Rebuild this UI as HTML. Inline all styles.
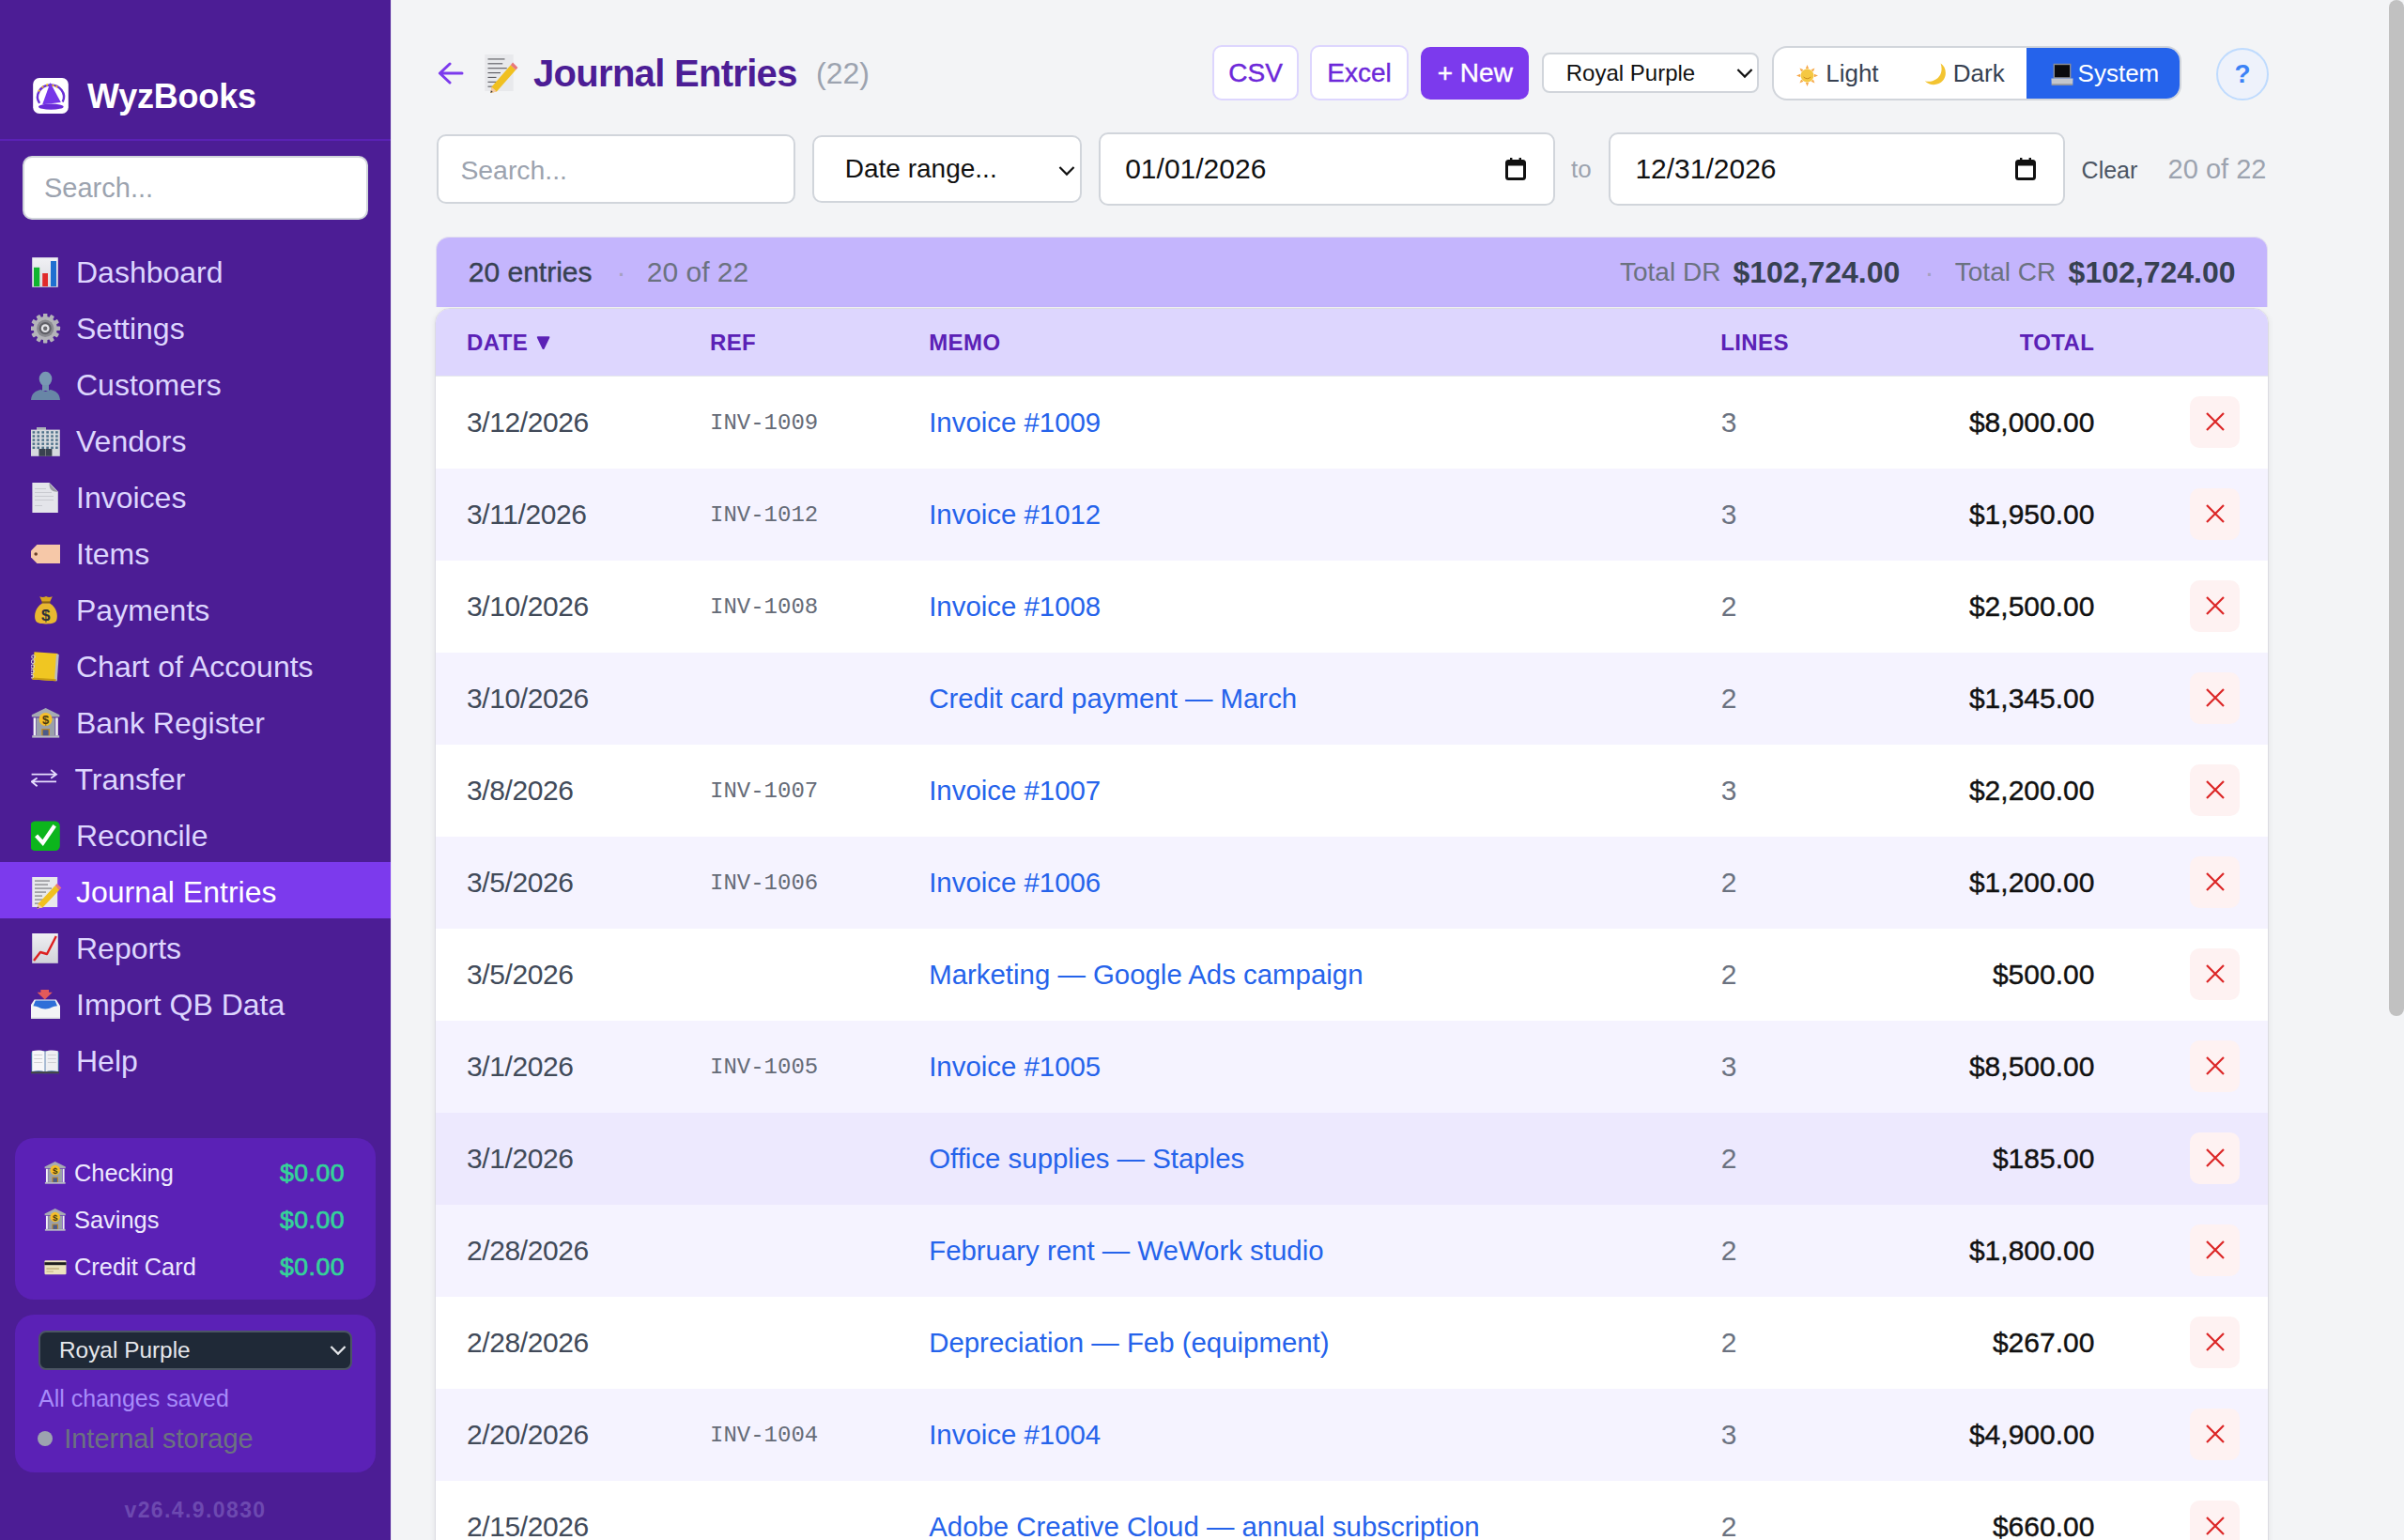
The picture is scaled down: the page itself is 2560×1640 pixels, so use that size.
<!DOCTYPE html>
<html><head><meta charset="utf-8"><title>Journal Entries</title>
<style>
html{zoom:2}
@media (max-width:1400px){html{zoom:1}}
*{box-sizing:border-box;margin:0;padding:0}
body{width:1280px;height:820px;overflow:hidden;background:#f3f4f6;font-family:"Liberation Sans",sans-serif;position:relative;color:#111}
.abs{position:absolute}
#side{position:absolute;left:0;top:0;width:208px;height:820px;background:#4c1d95}
#side .edge{position:absolute;left:208px;top:0;width:0.5px;height:820px;background:#e9e5f5}
.brand{position:absolute;left:17.5px;top:41.3px;width:19px;height:19px}
.brandt{position:absolute;left:46.5px;top:39.5px;font-size:18px;font-weight:700;color:#fff;line-height:24px;letter-spacing:-0.1px}
.sep{position:absolute;left:0;top:74px;width:208px;height:1px;background:#5b21b6}
.sinput{position:absolute;left:12px;top:83px;width:184px;height:34px;background:#fff;border:1px solid #d1d5db;border-radius:5px}
.sinput span{position:absolute;left:10.5px;top:0;line-height:32px;font-size:14.5px;color:#9ca3af}
.nav{position:absolute;left:0;width:208px;height:30px}
.nav.act{background:#7c3aed}
.nav .ic{position:absolute;left:16.5px;top:8px;width:16px;height:16px}
.nav .ic svg{display:block}
.nav .nt{position:absolute;top:1.2px;line-height:30px;font-size:16px;color:#ddd6fe;white-space:nowrap}
.nav.act .nt{color:#fff}
.box{position:absolute;left:8px;width:192px;background:#5b21b6;border-radius:10px}
.acct{position:absolute;left:0;width:192px;height:20px}
.acct .ic{position:absolute;left:15.5px;top:2px;width:12px;height:16px}
.acct .ic svg{width:12px;height:16px;display:block}
.acct .an{position:absolute;left:31.5px;top:0;line-height:20px;font-size:12.7px;color:#ede9fe}
.acct .av{position:absolute;right:16.5px;top:0;line-height:20px;font-size:13.3px;font-weight:400;-webkit-text-stroke:0.35px #34d399;color:#34d399;letter-spacing:0.25px}
.ssel{position:absolute;left:12.5px;top:8.3px;width:167px;height:21.3px;background:#1f2937;border:1px solid #4b5563;border-radius:4px}
.ssel span{position:absolute;left:10px;top:0.3px;line-height:19.3px;font-size:12.2px;color:#e5e7eb}
.ssel svg{position:absolute;left:154px;top:6.5px}
.saved{position:absolute;left:12.5px;top:36.6px;line-height:16px;font-size:12.5px;color:#a78bfa}
.dot{position:absolute;left:11.9px;top:62px;width:8px;height:8px;border-radius:50%;background:#9ca3af}
.storage{position:absolute;left:26.1px;top:57px;line-height:18px;font-size:14.5px;color:#6b7280}
.ver{position:absolute;left:0;width:208px;top:796px;line-height:16px;text-align:center;font-size:11.5px;font-weight:700;color:#6d49b0;letter-spacing:0.7px}
/* main */
.back{position:absolute;left:233px;top:33px}
.temoji{position:absolute;left:257.3px;top:29px;width:18px;height:19.5px;line-height:0}
.title{position:absolute;left:284px;top:26px;line-height:26px;font-size:20px;font-weight:700;color:#4c1d95;letter-spacing:-0.35px;white-space:nowrap}
.count{position:absolute;left:434.5px;top:28px;line-height:22px;font-size:16px;color:#9ca3af}
.btn{position:absolute;top:24.2px;height:29.5px;background:#fff;border:1px solid #ddd6fe;border-radius:5px;color:#6d28d9;font-size:14px;line-height:27.5px;text-align:center;-webkit-text-stroke:0.2px currentColor}
.btn.pri{background:#7c3aed;border-color:#7c3aed;color:#fff}
.tsel{position:absolute;left:820.8px;top:28px;width:115.8px;height:21.7px;background:#fff;border:1px solid #d1d5db;border-radius:4px}
.tsel span{position:absolute;left:12.1px;top:0;line-height:19.7px;font-size:12px;color:#111}
.tsel svg{position:absolute;left:102.6px;top:7px}
.toggle{position:absolute;left:943.3px;top:24.3px;width:218.3px;height:29.1px;background:#fff;border:1px solid #d1d5db;border-radius:8px;overflow:hidden}
.toggle .on{position:absolute;left:134.8px;top:0;width:83.5px;height:27.1px;background:#2563eb}
.toggle .t{position:absolute;top:0;line-height:27.1px;font-size:13px;color:#374151;white-space:nowrap}
.toggle .ti{position:absolute;top:7px;width:12px;height:12px}
.help{position:absolute;left:1180px;top:25.3px;width:28px;height:28px;border-radius:50%;border:1px solid #bfdbfe;background:#eef2fb;color:#3b82f6;font-weight:700;font-size:14px;line-height:26px;text-align:center}
.inp{position:absolute;background:#fff;border:1px solid #d1d5db;border-radius:5px}
.inp .tx{position:absolute;top:0;white-space:nowrap;color:#111}
.to{position:absolute;left:836.5px;top:81px;line-height:18px;font-size:13px;color:#9ca3af}
.clear{position:absolute;left:1108.3px;top:81.3px;line-height:18px;font-size:12.5px;color:#4b5563}
.of{position:absolute;left:1154.3px;top:81px;line-height:18px;font-size:14.5px;color:#9ca3af}
.sum{position:absolute;left:232.2px;top:126.1px;width:975.5px;height:37.4px;background:#c4b5fd;border:0.5px solid #e2def0;border-bottom:none;border-radius:7px 7px 0 0}
.sum .s{position:absolute;top:0;line-height:37px;white-space:nowrap}
.card{position:absolute;left:231.7px;top:164.1px;width:976.5px;height:700px;background:#fff;border:0.5px solid #dcdce2;border-radius:8px 8px 0 0;overflow:hidden;box-shadow:0 1px 3px rgba(0,0,0,0.08)}
.thead{position:absolute;left:0;top:0;width:100%;height:35.7px;background:#ddd6fe;border-bottom:0.5px solid #e5e7eb}
.th{position:absolute;top:0;line-height:36px;font-size:12px;font-weight:700;color:#5b21b6;letter-spacing:0.2px;white-space:nowrap}
.row{position:absolute;left:0;width:100%;height:49px}
.row span{position:absolute;top:0;line-height:49px;white-space:nowrap}
.c-date{left:16.3px;font-size:15px;color:#414a59;letter-spacing:-0.2px}
.c-ref{left:145.8px;top:0.6px !important;font-family:"Liberation Mono",monospace;font-size:12px;color:#656b77}
.c-memo{left:262.4px;font-size:14.7px;color:#2563eb}
.c-lines{left:684.2px;font-size:15px;color:#6b7280}
.c-total{right:92.5px;font-size:15px;color:#111;-webkit-text-stroke:0.2px #111}
.row .del{left:933.9px;top:10.4px;width:26.4px;height:27.7px;background:#fef2f2;border-radius:5px;line-height:0}
.del svg{position:absolute;left:8.2px;top:8.8px}
#sb{position:absolute;left:1272px;top:0;width:8px;height:541px;border-radius:4px;background:#c1c1c1}
</style></head><body>
<div id="side">
  <div class="edge"></div>
  <div class="brand"><svg viewBox="205 195 1130 1140" width="19" height="19"><rect x="205" y="195" width="1130" height="1140" rx="200" fill="#fff"/>
<path d="M413 1000 A 420 380 0 1 1 1151 960" stroke="#6a2fd6" stroke-width="72" fill="none"/>
<path d="M755 345 L1095 975 L505 1045 Z" fill="#7636e8"/>
<ellipse cx="780" cy="1115" rx="400" ry="92" fill="#6a2bd8"/>
<g fill="#f5c518"><circle cx="400" cy="605" r="34"/><circle cx="515" cy="485" r="34"/><circle cx="655" cy="420" r="34"/><circle cx="845" cy="440" r="34"/><circle cx="962" cy="478" r="34"/></g>
</svg></div>
  <div class="brandt">WyzBooks</div>
  <div class="sep"></div>
  <div class="sinput"><span>Search...</span></div>
  <div class="nav" style="top:129px"><span class="ic"><svg viewBox="0 0 16 16" width="16" height="16"><defs><linearGradient id="gd" x1="0" y1="0" x2="0" y2="1"><stop offset="0" stop-color="#f1f1f5"/><stop offset="1" stop-color="#d9dae0"/></linearGradient></defs><rect x="0.6" y="0.1" width="13.8" height="15.8" fill="url(#gd)"/><rect x="1.5" y="5.4" width="3.1" height="10.1" fill="#10b530"/><rect x="6.1" y="8.5" width="2.9" height="7" fill="#e02a2a"/><rect x="10.5" y="2" width="3" height="13.5" fill="#1f6fd0"/></svg></span><span class="nt" style="left:40.5px">Dashboard</span></div>
<div class="nav" style="top:159px"><span class="ic"><svg viewBox="0 0 16 16" width="16" height="16"><g fill="#b4b4b9"><rect x="6.5" y="-0.1" width="2.2" height="3.2" rx="0.4" transform="rotate(0 7.6 7.85)"/><rect x="6.5" y="-0.1" width="2.2" height="3.2" rx="0.4" transform="rotate(30 7.6 7.85)"/><rect x="6.5" y="-0.1" width="2.2" height="3.2" rx="0.4" transform="rotate(60 7.6 7.85)"/><rect x="6.5" y="-0.1" width="2.2" height="3.2" rx="0.4" transform="rotate(90 7.6 7.85)"/><rect x="6.5" y="-0.1" width="2.2" height="3.2" rx="0.4" transform="rotate(120 7.6 7.85)"/><rect x="6.5" y="-0.1" width="2.2" height="3.2" rx="0.4" transform="rotate(150 7.6 7.85)"/><rect x="6.5" y="-0.1" width="2.2" height="3.2" rx="0.4" transform="rotate(180 7.6 7.85)"/><rect x="6.5" y="-0.1" width="2.2" height="3.2" rx="0.4" transform="rotate(210 7.6 7.85)"/><rect x="6.5" y="-0.1" width="2.2" height="3.2" rx="0.4" transform="rotate(240 7.6 7.85)"/><rect x="6.5" y="-0.1" width="2.2" height="3.2" rx="0.4" transform="rotate(270 7.6 7.85)"/><rect x="6.5" y="-0.1" width="2.2" height="3.2" rx="0.4" transform="rotate(300 7.6 7.85)"/><rect x="6.5" y="-0.1" width="2.2" height="3.2" rx="0.4" transform="rotate(330 7.6 7.85)"/><circle cx="7.6" cy="7.85" r="6.3"/></g><circle cx="7.6" cy="7.85" r="4.6" fill="#8a8a90"/><circle cx="7.6" cy="7.85" r="3.3" fill="#5f5f66"/><circle cx="7.6" cy="7.85" r="2.2" fill="#e6e6ea"/><circle cx="7.6" cy="7.85" r="1.1" fill="#6b6b70"/></svg></span><span class="nt" style="left:40.5px">Settings</span></div>
<div class="nav" style="top:189px"><span class="ic"><svg viewBox="0 0 16 16" width="16" height="16"><ellipse cx="7.75" cy="4.8" rx="3.4" ry="3.9" fill="#7897b3"/><path d="M0 16 C0.3 12.2 2.5 11.2 5.2 10.5 L7.75 11.5 L10.3 10.5 C13 11.2 15.2 12.2 15.5 16 Z" fill="#6886a6"/><rect x="6" y="8" width="3.5" height="3" fill="#7391ae"/></svg></span><span class="nt" style="left:40.5px">Customers</span></div>
<div class="nav" style="top:219px"><span class="ic"><svg viewBox="0 0 16 16" width="16" height="16"><rect x="3" y="0.5" width="5" height="1.6" fill="#aab0b8"/><rect x="-0.3" y="1.8" width="15.7" height="14.1" fill="#d6d9de"/><rect x="0.8" y="2.6" width="1.3" height="1.2" fill="#4d6f88"/><rect x="3.25" y="2.6" width="1.3" height="1.2" fill="#4d6f88"/><rect x="5.7" y="2.6" width="1.3" height="1.2" fill="#4d6f88"/><rect x="8.15" y="2.6" width="1.3" height="1.2" fill="#4d6f88"/><rect x="10.600000000000001" y="2.6" width="1.3" height="1.2" fill="#4d6f88"/><rect x="13.05" y="2.6" width="1.3" height="1.2" fill="#4d6f88"/><rect x="0.8" y="4.65" width="1.3" height="1.2" fill="#4d6f88"/><rect x="3.25" y="4.65" width="1.3" height="1.2" fill="#4d6f88"/><rect x="5.7" y="4.65" width="1.3" height="1.2" fill="#4d6f88"/><rect x="8.15" y="4.65" width="1.3" height="1.2" fill="#4d6f88"/><rect x="10.600000000000001" y="4.65" width="1.3" height="1.2" fill="#4d6f88"/><rect x="13.05" y="4.65" width="1.3" height="1.2" fill="#4d6f88"/><rect x="0.8" y="6.699999999999999" width="1.3" height="1.2" fill="#4d6f88"/><rect x="3.25" y="6.699999999999999" width="1.3" height="1.2" fill="#4d6f88"/><rect x="5.7" y="6.699999999999999" width="1.3" height="1.2" fill="#4d6f88"/><rect x="8.15" y="6.699999999999999" width="1.3" height="1.2" fill="#4d6f88"/><rect x="10.600000000000001" y="6.699999999999999" width="1.3" height="1.2" fill="#4d6f88"/><rect x="13.05" y="6.699999999999999" width="1.3" height="1.2" fill="#4d6f88"/><rect x="0.8" y="8.75" width="1.3" height="1.2" fill="#4d6f88"/><rect x="3.25" y="8.75" width="1.3" height="1.2" fill="#4d6f88"/><rect x="5.7" y="8.75" width="1.3" height="1.2" fill="#4d6f88"/><rect x="8.15" y="8.75" width="1.3" height="1.2" fill="#4d6f88"/><rect x="10.600000000000001" y="8.75" width="1.3" height="1.2" fill="#4d6f88"/><rect x="13.05" y="8.75" width="1.3" height="1.2" fill="#4d6f88"/><rect x="0.8" y="10.799999999999999" width="1.3" height="1.2" fill="#4d6f88"/><rect x="3.25" y="10.799999999999999" width="1.3" height="1.2" fill="#4d6f88"/><rect x="5.7" y="10.799999999999999" width="1.3" height="1.2" fill="#4d6f88"/><rect x="8.15" y="10.799999999999999" width="1.3" height="1.2" fill="#4d6f88"/><rect x="10.600000000000001" y="10.799999999999999" width="1.3" height="1.2" fill="#4d6f88"/><rect x="13.05" y="10.799999999999999" width="1.3" height="1.2" fill="#4d6f88"/><rect x="4.2" y="12" width="7" height="3.9" fill="#3a4250"/><rect x="7.5" y="12" width="0.4" height="3.9" fill="#888"/></svg></span><span class="nt" style="left:40.5px">Vendors</span></div>
<div class="nav" style="top:249px"><span class="ic"><svg viewBox="0 0 16 16" width="16" height="16"><path d="M0.7 0 H9.8 L14.4 4.8 V16 H0.7 Z" fill="#e4e5ea"/><g fill="#c9cad0"><rect x="2" y="3" width="6" height="0.5"/><rect x="2" y="5" width="9" height="0.5"/><rect x="2" y="7" width="10" height="0.5"/><rect x="2" y="9" width="10" height="0.5"/><rect x="2" y="12" width="4" height="0.5"/></g><path d="M9.8 0 C9.6 3 10.5 5 14.4 4.8 C12.5 3.5 11 1.8 9.8 0 Z" fill="#9b9ca3"/></svg></span><span class="nt" style="left:40.5px">Invoices</span></div>
<div class="nav" style="top:279px"><span class="ic"><svg viewBox="0 0 16 16" width="16" height="16"><path d="M3.2 3 H15.5 V13 H3.2 L-0.3 9.5 V6.5 Z" fill="#f6c8a8"/><circle cx="2.6" cy="8" r="0.9" fill="#6b3f2a"/></svg></span><span class="nt" style="left:40.5px">Items</span></div>
<div class="nav" style="top:309px"><span class="ic"><svg viewBox="0 0 16 16" width="16" height="16"><path d="M4.6 0.6 C6 1.2 7 1 8 0.5 C9 1 10 1.2 11.4 0.6 L10 3.6 H6 Z" fill="#d9a520"/><rect x="5.8" y="3.2" width="4.4" height="1.1" fill="#8a6410"/><path d="M6 4.2 C2.2 6.5 1.6 10.5 2.3 13 C2.8 14.8 5 15.2 8 15.2 C11 15.2 13.2 14.8 13.7 13 C14.4 10.5 13.8 6.5 10 4.2 Z" fill="#e8b830"/><text x="7.9" y="13.3" font-size="8.5" font-family="Liberation Sans" font-weight="700" text-anchor="middle" fill="#2b2f3a">$</text></svg></span><span class="nt" style="left:40.5px">Payments</span></div>
<div class="nav" style="top:339px"><span class="ic"><svg viewBox="0 0 16 16" width="16" height="16"><g transform="rotate(4 8 8)"><rect x="1.2" y="0.6" width="12.6" height="14.6" fill="#f0c622"/><rect x="13" y="1" width="1.4" height="14.2" fill="#b9bcc4"/><rect x="1.2" y="14.2" width="12.6" height="1" fill="#c79a12"/><circle cx="0.9" cy="3.2" r="0.9" fill="none" stroke="#d0d0d8" stroke-width="0.5"/><circle cx="0.9" cy="5.800000000000001" r="0.9" fill="none" stroke="#d0d0d8" stroke-width="0.5"/><circle cx="0.9" cy="8.4" r="0.9" fill="none" stroke="#d0d0d8" stroke-width="0.5"/><circle cx="0.9" cy="11.0" r="0.9" fill="none" stroke="#d0d0d8" stroke-width="0.5"/><circle cx="0.9" cy="13.600000000000001" r="0.9" fill="none" stroke="#d0d0d8" stroke-width="0.5"/></g></svg></span><span class="nt" style="left:40.5px">Chart of Accounts</span></div>
<div class="nav" style="top:369px"><span class="ic"><svg viewBox="0 0 16 16" width="16" height="16"><path d="M7.8 0 L15.2 3.6 V4.8 H0.4 V3.6 Z" fill="#a6abb3"/><rect x="0.6" y="14.6" width="14.5" height="1.2" fill="#b8bcc3"/><g fill="#f2f2f4"><rect x="1.3" y="5.2" width="1.3" height="9.4"/><rect x="13.1" y="5.2" width="1.3" height="9.4"/></g><rect x="2.8" y="5.2" width="10" height="9.4" fill="#9aa0aa"/><rect x="5.6" y="11" width="4.4" height="3.6" fill="#c08a2a"/><rect x="6.3" y="11.6" width="3" height="3" fill="#4b5a8a"/><circle cx="7.8" cy="6" r="3.5" fill="#f5bf2a"/><text x="7.8" y="8.6" font-size="6.5" font-family="Liberation Sans" font-weight="700" text-anchor="middle" fill="#4a3a10">$</text></svg></span><span class="nt" style="left:40.5px">Bank Register</span></div>
<div class="nav" style="top:399px"><span class="ic"><svg viewBox="0 0 16 16" width="16" height="16"><g stroke="#e5defd" stroke-width="0.9" fill="none"><path d="M0.3 5.3 H13.4 M10.6 3 L13.5 5.3 L10.6 7.4"/><path d="M13.5 9.2 H0.4 M3.3 7.2 L0.4 9.2 L3.3 11.6"/></g></svg></span><span class="nt" style="left:39.7px">Transfer</span></div>
<div class="nav" style="top:429px"><span class="ic"><svg viewBox="0 0 16 16" width="16" height="16"><rect x="-0.4" y="0.3" width="15.8" height="15.7" rx="2.6" fill="#0cb51c"/><path d="M2.8 7.9 L6.3 11.8 L12.6 2.6" stroke="#fff" stroke-width="2.1" fill="none" stroke-linejoin="miter"/></svg></span><span class="nt" style="left:40.5px">Reconcile</span></div>
<div class="nav act" style="top:459px"><span class="ic"><svg viewBox="0 0 16 16" width="16" height="16" style="overflow:visible"><rect x="0.6" y="0" width="13.5" height="16" fill="#e8e9ec"/><g fill="#5a5a60"><rect x="2" y="1.8" width="8" height="0.45"/><rect x="2" y="3.8" width="7" height="0.45"/><rect x="2" y="5.8" width="9" height="0.45"/><rect x="2" y="7.8" width="6" height="0.45"/><rect x="2" y="9.8" width="4" height="0.45"/><rect x="2" y="11.8" width="7" height="0.45"/><rect x="2" y="13.8" width="5" height="0.45"/></g><path d="M3.8 14.2 L12.8 4.6 L15.2 6.8 L6.2 16.2 L3.3 16.8 Z" fill="#f0c020"/><path d="M12.8 4.6 L13.8 3.5 L16.2 5.7 L15.2 6.8 Z" fill="#e8787a"/><path d="M3.8 14.2 L6.2 16.2 L3.3 16.8 Z" fill="#f3c9a8"/><path d="M3.5 15.7 L4.3 16.3 L3.3 16.8 Z" fill="#333"/></svg></span><span class="nt" style="left:40.5px">Journal Entries</span></div>
<div class="nav" style="top:489px"><span class="ic"><svg viewBox="0 0 16 16" width="16" height="16"><defs><linearGradient id="gc" x1="0" y1="0" x2="0" y2="1"><stop offset="0" stop-color="#efeff3"/><stop offset="1" stop-color="#d2d3d9"/></linearGradient></defs><rect x="0.6" y="0" width="13.8" height="15.9" fill="url(#gc)"/><path d="M1.5 14.5 L5 10 L8.5 11 L13.4 1.5" stroke="#dd2020" stroke-width="1.2" fill="none" stroke-linejoin="round"/></svg></span><span class="nt" style="left:40.5px">Reports</span></div>
<div class="nav" style="top:519px"><span class="ic"><svg viewBox="0 0 16 16" width="16" height="16"><path d="M5.2 0 H9.5 V1.4 H11.4 L7.35 5.2 L3.3 1.4 H5.2 Z" fill="#e35a5a"/><path d="M-0.4 8.6 L1.8 5.3 H13.4 L15.5 8.6 V15.5 H-0.4 Z" fill="#f3f4f6"/><path d="M1.2 8.6 L2.4 5.8 H12.8 L14 8.6 C11.5 8.6 10.5 10.2 7.6 10.2 C4.7 10.2 3.7 8.6 1.2 8.6 Z" fill="#2e6fd8"/><rect x="-0.4" y="14.8" width="15.9" height="0.7" fill="#d4d6dc"/></svg></span><span class="nt" style="left:40.5px">Import QB Data</span></div>
<div class="nav" style="top:549px"><span class="ic"><svg viewBox="0 0 16 16" width="16" height="16"><path d="M0 3.2 L7.4 2.5 L7.8 14.6 H0.2 Z" fill="#3b6aa3"/><path d="M15 3.2 L7.6 2.5 L7.2 14.6 H14.8 Z" fill="#3b6aa3"/><path d="M0.6 2.6 C3 2 5.5 2.1 7.3 2.8 V13.6 C5.5 13 3 13 0.6 13.5 Z" fill="#f7f7f9"/><path d="M14.4 2.6 C12 2 9.5 2.1 7.7 2.8 V13.6 C9.5 13 12 13 14.4 13.5 Z" fill="#eeeff2"/><rect x="0" y="13.6" width="15" height="1" fill="#444"/><g fill="#c8c8cc"><rect x="1.6" y="4.5" width="4.5" height="0.4"/><rect x="1.6" y="6.5" width="4.5" height="0.4"/><rect x="1.6" y="8.5" width="4.5" height="0.4"/><rect x="8.9" y="4.5" width="4.5" height="0.4"/><rect x="8.9" y="6.5" width="4.5" height="0.4"/><rect x="8.9" y="8.5" width="4.5" height="0.4"/></g></svg></span><span class="nt" style="left:40.5px">Help</span></div>
  <div class="box" style="top:606px;height:86px">
    <div class="acct" style="top:8.7px"><span class="ic"><svg viewBox="0 0 16 16" width="16" height="16"><path d="M7.8 0 L15.2 3.6 V4.8 H0.4 V3.6 Z" fill="#a6abb3"/><rect x="0.6" y="14.6" width="14.5" height="1.2" fill="#b8bcc3"/><g fill="#f2f2f4"><rect x="1.3" y="5.2" width="1.3" height="9.4"/><rect x="13.1" y="5.2" width="1.3" height="9.4"/></g><rect x="2.8" y="5.2" width="10" height="9.4" fill="#9aa0aa"/><rect x="5.6" y="11" width="4.4" height="3.6" fill="#c08a2a"/><rect x="6.3" y="11.6" width="3" height="3" fill="#4b5a8a"/><circle cx="7.8" cy="6" r="3.5" fill="#f5bf2a"/><text x="7.8" y="8.6" font-size="6.5" font-family="Liberation Sans" font-weight="700" text-anchor="middle" fill="#4a3a10">$</text></svg></span><span class="an">Checking</span><span class="av">$0.00</span></div>
    <div class="acct" style="top:33.7px"><span class="ic"><svg viewBox="0 0 16 16" width="16" height="16"><path d="M7.8 0 L15.2 3.6 V4.8 H0.4 V3.6 Z" fill="#a6abb3"/><rect x="0.6" y="14.6" width="14.5" height="1.2" fill="#b8bcc3"/><g fill="#f2f2f4"><rect x="1.3" y="5.2" width="1.3" height="9.4"/><rect x="13.1" y="5.2" width="1.3" height="9.4"/></g><rect x="2.8" y="5.2" width="10" height="9.4" fill="#9aa0aa"/><rect x="5.6" y="11" width="4.4" height="3.6" fill="#c08a2a"/><rect x="6.3" y="11.6" width="3" height="3" fill="#4b5a8a"/><circle cx="7.8" cy="6" r="3.5" fill="#f5bf2a"/><text x="7.8" y="8.6" font-size="6.5" font-family="Liberation Sans" font-weight="700" text-anchor="middle" fill="#4a3a10">$</text></svg></span><span class="an">Savings</span><span class="av">$0.00</span></div>
    <div class="acct" style="top:58.4px"><span class="ic"><svg viewBox="0 0 16 16" width="16" height="16"><rect x="0.3" y="3.5" width="15.4" height="10" rx="0.8" fill="#ece3bd"/><rect x="0.3" y="4.8" width="15.4" height="2" fill="#1d1d1f"/><rect x="1.6" y="8.8" width="9" height="1.2" fill="#c9b98a"/><rect x="1.6" y="11" width="5" height="0.8" fill="#c9b98a"/></svg></span><span class="an">Credit Card</span><span class="av">$0.00</span></div>
  </div>
  <div class="box" style="top:700px;height:84px">
    <div class="ssel"><span>Royal Purple</span><svg viewBox="0 0 10 6" width="9" height="6"><path d="M0.8 0.8 L5 5 L9.2 0.8" stroke="#e5e7eb" stroke-width="1.2" fill="none"/></svg></div>
    <div class="saved">All changes saved</div>
    <div class="dot"></div>
    <div class="storage">Internal storage</div>
  </div>
  <div class="ver">v26.4.9.0830</div>
</div>

<svg class="back" width="14" height="12" viewBox="0 0 14 12"><path d="M13 6 H1.5 M6.5 1 L1.2 6 L6.5 11" stroke="#7c3aed" stroke-width="1.5" fill="none" stroke-linecap="round" stroke-linejoin="round"/></svg>
<div class="temoji"><svg viewBox="0 0 16 16" width="18" height="19.5" preserveAspectRatio="none" style="overflow:visible"><rect x="0.6" y="0" width="13.5" height="16" fill="#e8e9ec"/><g fill="#5a5a60"><rect x="2" y="1.8" width="8" height="0.45"/><rect x="2" y="3.8" width="7" height="0.45"/><rect x="2" y="5.8" width="9" height="0.45"/><rect x="2" y="7.8" width="6" height="0.45"/><rect x="2" y="9.8" width="4" height="0.45"/><rect x="2" y="11.8" width="7" height="0.45"/><rect x="2" y="13.8" width="5" height="0.45"/></g><path d="M3.8 14.2 L12.8 4.6 L15.2 6.8 L6.2 16.2 L3.3 16.8 Z" fill="#f0c020"/><path d="M12.8 4.6 L13.8 3.5 L16.2 5.7 L15.2 6.8 Z" fill="#e8787a"/><path d="M3.8 14.2 L6.2 16.2 L3.3 16.8 Z" fill="#f3c9a8"/><path d="M3.5 15.7 L4.3 16.3 L3.3 16.8 Z" fill="#333"/></svg></div>
<div class="title">Journal Entries</div>
<div class="count">(22)</div>
<div class="btn" style="left:645.7px;width:45.7px">CSV</div>
<div class="btn" style="left:697.6px;width:52.4px">Excel</div>
<div class="btn pri" style="left:756.6px;width:57.6px;top:24.8px;height:28.2px;line-height:26.2px">+ New</div>
<div class="tsel"><span>Royal Purple</span><svg viewBox="0 0 10 6" width="9" height="6"><path d="M0.8 0.8 L5 5 L9.2 0.8" stroke="#111" stroke-width="1.2" fill="none"/></svg></div>
<div class="toggle">
  <div class="on"></div>
  <span class="ti" style="left:12.1px;top:6.2px"><svg viewBox="0 0 12 12" width="11.5" height="11.5"><g fill="#f7a94a"><path d="M6 0 L6.9 2.2 H5.1 Z"/><path d="M6 12 L6.9 9.8 H5.1 Z"/><path d="M0 6 L2.2 5.1 V6.9 Z"/><path d="M12 6 L9.8 5.1 V6.9 Z"/><path d="M1.8 1.8 L3.9 2.7 L2.7 3.9 Z"/><path d="M10.2 10.2 L8.1 9.3 L9.3 8.1 Z"/><path d="M1.8 10.2 L2.7 8.1 L3.9 9.3 Z"/><path d="M10.2 1.8 L9.3 3.9 L8.1 2.7 Z"/></g><circle cx="6" cy="6" r="3.6" fill="#f5c842"/><path d="M4 6.8 Q6 8.6 8 6.8" stroke="#c98a1a" stroke-width="0.5" fill="none"/></svg></span>
  <span class="t" style="left:27.8px">Light</span>
  <span class="ti" style="left:80.3px;top:5.8px"><svg viewBox="0 0 12 12" width="12" height="12"><path d="M8.8 0.3 C11.8 2.2 12.3 6.6 10 9.4 C7.6 12.2 3 12.3 0.4 9.6 C4 10.6 8 8.6 9 5.2 C9.5 3.5 9.3 1.8 8.8 0.3 Z" fill="#f3c431"/></svg></span>
  <span class="t" style="left:95.6px">Dark</span>
  <span class="ti" style="left:147.8px;top:5.8px"><svg viewBox="0 0 12 12" width="12" height="12"><path d="M1.3 0.4 H10.7 V8.2 H1.3 Z" fill="#8a8d93"/><rect x="2" y="1.1" width="8" height="6.5" fill="#0b0b0d"/><path d="M0.2 8.2 H11.8 L11.6 11.9 H0.4 Z" fill="#c4c7cc"/><rect x="0.4" y="11.2" width="11.2" height="0.7" fill="#8a8d93"/></svg></span>
  <span class="t" style="left:162px;color:#fff">System</span>
</div>
<div class="help">?</div>

<div class="inp" style="left:232.4px;top:71.4px;width:191.3px;height:37px"><span class="tx" style="left:11.8px;top:0.5px;line-height:35px;font-size:14.2px;color:#9ca3af">Search...</span></div>
<div class="inp" style="left:432.4px;top:72.2px;width:143.8px;height:35.8px"><span class="tx" style="left:16.5px;line-height:33.8px;font-size:14px">Date range...</span><span style="position:absolute;left:130.3px;top:14.9px;line-height:0"><svg viewBox="0 0 10 6" width="9" height="6"><path d="M0.8 0.8 L5 5 L9.2 0.8" stroke="#111" stroke-width="1.2" fill="none"/></svg></span></div>
<div class="inp" style="left:584.8px;top:70.3px;width:243.2px;height:39.2px"><span class="tx" style="left:13.3px;line-height:37.2px;font-size:15px">01/01/2026</span><span style="position:absolute;left:215.8px;top:12.8px;line-height:0"><svg viewBox="0 0 11 12" width="11" height="12"><rect x="0.75" y="1.75" width="9.5" height="9.5" rx="1" stroke="#111" stroke-width="1.5" fill="none"/><rect x="0.75" y="1.75" width="9.5" height="2.5" fill="#111"/><rect x="2.5" y="0" width="1.2" height="2.5" fill="#111"/><rect x="7.3" y="0" width="1.2" height="2.5" fill="#111"/></svg></span></div>
<div class="to">to</div>
<div class="inp" style="left:856.4px;top:70.3px;width:243.3px;height:39.2px"><span class="tx" style="left:13.3px;line-height:37.2px;font-size:15px">12/31/2026</span><span style="position:absolute;left:215.8px;top:12.8px;line-height:0"><svg viewBox="0 0 11 12" width="11" height="12"><rect x="0.75" y="1.75" width="9.5" height="9.5" rx="1" stroke="#111" stroke-width="1.5" fill="none"/><rect x="0.75" y="1.75" width="9.5" height="2.5" fill="#111"/><rect x="2.5" y="0" width="1.2" height="2.5" fill="#111"/><rect x="7.3" y="0" width="1.2" height="2.5" fill="#111"/></svg></span></div>
<div class="clear">Clear</div>
<div class="of">20 of 22</div>

<div class="sum">
  <span class="s" style="left:16.7px;font-size:15px;color:#374151;-webkit-text-stroke:0.2px #374151">20 entries</span>
  <span class="s" style="left:95.5px;font-size:15px;color:#a5a0c0">·</span>
  <span class="s" style="left:111.7px;font-size:15px;color:#6b7280">20 of 22</span>
  <span class="s" style="left:629.8px;font-size:14px;color:#6b7280">Total DR</span>
  <span class="s" style="left:690px;font-size:16px;font-weight:700;color:#374151">$102,724.00</span>
  <span class="s" style="left:792px;font-size:15px;color:#a5a0c0">·</span>
  <span class="s" style="left:808.2px;font-size:14px;color:#6b7280">Total CR</span>
  <span class="s" style="left:868.6px;font-size:16px;font-weight:700;color:#374151">$102,724.00</span>
</div>

<div class="card">
  <div class="thead">
    <span class="th" style="left:16.3px">DATE</span><svg style="position:absolute;left:53.1px;top:13.7px" width="7.6" height="8" viewBox="0 0 8 8"><path d="M0.9 0.4 H7.1 Q7.9 0.4 7.5 1.2 L4.6 7.3 Q4 8.2 3.4 7.3 L0.5 1.2 Q0.1 0.4 0.9 0.4 Z" fill="#5b21b6"/></svg>
    <span class="th" style="left:145.8px">REF</span>
    <span class="th" style="left:262.4px">MEMO</span>
    <span class="th" style="left:683.9px">LINES</span>
    <span class="th" style="right:92.5px">TOTAL</span>
  </div>
  
</div>
<div id="rows" style="position:absolute;left:232.2px;top:0;width:975.5px;height:820px;overflow:hidden">
<div class="row" style="top:200.5px;background:#ffffff"><span class="c-date">3/12/2026</span><span class="c-ref">INV-1009</span><span class="c-memo">Invoice #1009</span><span class="c-lines">3</span><span class="c-total">$8,000.00</span><span class="del"><svg viewBox="0 0 10 10" width="10" height="10"><path d="M0.5 0.5 L9.5 9.5 M9.5 0.5 L0.5 9.5" stroke="#dc2626" stroke-width="1.1"/></svg></span></div>
<div class="row" style="top:249.5px;background:#f5f3ff"><span class="c-date">3/11/2026</span><span class="c-ref">INV-1012</span><span class="c-memo">Invoice #1012</span><span class="c-lines">3</span><span class="c-total">$1,950.00</span><span class="del"><svg viewBox="0 0 10 10" width="10" height="10"><path d="M0.5 0.5 L9.5 9.5 M9.5 0.5 L0.5 9.5" stroke="#dc2626" stroke-width="1.1"/></svg></span></div>
<div class="row" style="top:298.5px;background:#ffffff"><span class="c-date">3/10/2026</span><span class="c-ref">INV-1008</span><span class="c-memo">Invoice #1008</span><span class="c-lines">2</span><span class="c-total">$2,500.00</span><span class="del"><svg viewBox="0 0 10 10" width="10" height="10"><path d="M0.5 0.5 L9.5 9.5 M9.5 0.5 L0.5 9.5" stroke="#dc2626" stroke-width="1.1"/></svg></span></div>
<div class="row" style="top:347.5px;background:#f5f3ff"><span class="c-date">3/10/2026</span><span class="c-ref"></span><span class="c-memo">Credit card payment — March</span><span class="c-lines">2</span><span class="c-total">$1,345.00</span><span class="del"><svg viewBox="0 0 10 10" width="10" height="10"><path d="M0.5 0.5 L9.5 9.5 M9.5 0.5 L0.5 9.5" stroke="#dc2626" stroke-width="1.1"/></svg></span></div>
<div class="row" style="top:396.5px;background:#ffffff"><span class="c-date">3/8/2026</span><span class="c-ref">INV-1007</span><span class="c-memo">Invoice #1007</span><span class="c-lines">3</span><span class="c-total">$2,200.00</span><span class="del"><svg viewBox="0 0 10 10" width="10" height="10"><path d="M0.5 0.5 L9.5 9.5 M9.5 0.5 L0.5 9.5" stroke="#dc2626" stroke-width="1.1"/></svg></span></div>
<div class="row" style="top:445.5px;background:#f5f3ff"><span class="c-date">3/5/2026</span><span class="c-ref">INV-1006</span><span class="c-memo">Invoice #1006</span><span class="c-lines">2</span><span class="c-total">$1,200.00</span><span class="del"><svg viewBox="0 0 10 10" width="10" height="10"><path d="M0.5 0.5 L9.5 9.5 M9.5 0.5 L0.5 9.5" stroke="#dc2626" stroke-width="1.1"/></svg></span></div>
<div class="row" style="top:494.5px;background:#ffffff"><span class="c-date">3/5/2026</span><span class="c-ref"></span><span class="c-memo">Marketing — Google Ads campaign</span><span class="c-lines">2</span><span class="c-total">$500.00</span><span class="del"><svg viewBox="0 0 10 10" width="10" height="10"><path d="M0.5 0.5 L9.5 9.5 M9.5 0.5 L0.5 9.5" stroke="#dc2626" stroke-width="1.1"/></svg></span></div>
<div class="row" style="top:543.5px;background:#f5f3ff"><span class="c-date">3/1/2026</span><span class="c-ref">INV-1005</span><span class="c-memo">Invoice #1005</span><span class="c-lines">3</span><span class="c-total">$8,500.00</span><span class="del"><svg viewBox="0 0 10 10" width="10" height="10"><path d="M0.5 0.5 L9.5 9.5 M9.5 0.5 L0.5 9.5" stroke="#dc2626" stroke-width="1.1"/></svg></span></div>
<div class="row" style="top:592.5px;background:#ede9fe"><span class="c-date">3/1/2026</span><span class="c-ref"></span><span class="c-memo">Office supplies — Staples</span><span class="c-lines">2</span><span class="c-total">$185.00</span><span class="del"><svg viewBox="0 0 10 10" width="10" height="10"><path d="M0.5 0.5 L9.5 9.5 M9.5 0.5 L0.5 9.5" stroke="#dc2626" stroke-width="1.1"/></svg></span></div>
<div class="row" style="top:641.5px;background:#f5f3ff"><span class="c-date">2/28/2026</span><span class="c-ref"></span><span class="c-memo">February rent — WeWork studio</span><span class="c-lines">2</span><span class="c-total">$1,800.00</span><span class="del"><svg viewBox="0 0 10 10" width="10" height="10"><path d="M0.5 0.5 L9.5 9.5 M9.5 0.5 L0.5 9.5" stroke="#dc2626" stroke-width="1.1"/></svg></span></div>
<div class="row" style="top:690.5px;background:#ffffff"><span class="c-date">2/28/2026</span><span class="c-ref"></span><span class="c-memo">Depreciation — Feb (equipment)</span><span class="c-lines">2</span><span class="c-total">$267.00</span><span class="del"><svg viewBox="0 0 10 10" width="10" height="10"><path d="M0.5 0.5 L9.5 9.5 M9.5 0.5 L0.5 9.5" stroke="#dc2626" stroke-width="1.1"/></svg></span></div>
<div class="row" style="top:739.5px;background:#f5f3ff"><span class="c-date">2/20/2026</span><span class="c-ref">INV-1004</span><span class="c-memo">Invoice #1004</span><span class="c-lines">3</span><span class="c-total">$4,900.00</span><span class="del"><svg viewBox="0 0 10 10" width="10" height="10"><path d="M0.5 0.5 L9.5 9.5 M9.5 0.5 L0.5 9.5" stroke="#dc2626" stroke-width="1.1"/></svg></span></div>
<div class="row" style="top:788.5px;background:#ffffff"><span class="c-date">2/15/2026</span><span class="c-ref"></span><span class="c-memo">Adobe Creative Cloud — annual subscription</span><span class="c-lines">2</span><span class="c-total">$660.00</span><span class="del"><svg viewBox="0 0 10 10" width="10" height="10"><path d="M0.5 0.5 L9.5 9.5 M9.5 0.5 L0.5 9.5" stroke="#dc2626" stroke-width="1.1"/></svg></span></div>
</div>
<div id="sb"></div>
</body></html>
